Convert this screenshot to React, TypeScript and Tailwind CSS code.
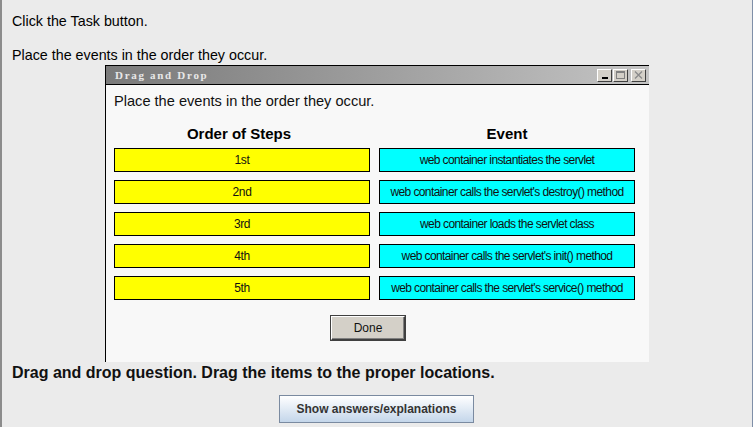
import React from "react";

const steps = ["1st", "2nd", "3rd", "4th", "5th"];
const events = [
  "web container instantiates the servlet",
  "web container calls the servlet's destroy() method",
  "web container loads the servlet class",
  "web container calls the servlet's init() method",
  "web container calls the servlet's service() method",
];

function TitleBtn({ children }: { children: React.ReactNode }) {
  return (
    <div className="w-[15px] h-[13px] bg-[#d4d0c8] border-t border-l border-t-white border-l-white border-b border-r border-b-[#404040] border-r-[#404040] flex items-center justify-center">
      {children}
    </div>
  );
}

export default function App() {
  return (
    <div
      className="w-[753px] h-[427px] bg-[#ebebeb] border-l-2 border-l-[#8c8c8c] border-r border-r-[#7f8fa8] overflow-hidden text-black"
      style={{ fontFamily: '"Liberation Sans", Arial, sans-serif' }}
    >
      <div className="pl-[10px] pt-[13px] text-[14.3px] leading-[16px]">Click the Task button.</div>
      <div className="pl-[10px] mt-[18px] text-[14.3px] leading-[16px]">Place the events in the order they occur.</div>

      <div className="ml-[103px] mt-[2px] w-[544px] h-[297px] border-l border-t border-black bg-[#f8f8f8] flex flex-col">
        <div className="h-[19px] border-b border-black bg-gradient-to-r from-[#7a7a7a] to-[#c4c4c4] flex items-center justify-between pl-[9px] pr-[3px]">
          <span
            className="text-[11px] font-bold text-[#e8e8e8] tracking-[1.7px]"
            style={{ fontFamily: '"Liberation Serif", "DejaVu Serif", serif' }}
          >
            Drag and Drop
          </span>
          <div className="flex gap-[1px] items-center">
            <TitleBtn>
              <div className="w-[6px] h-[2px] bg-black mt-[6px]" />
            </TitleBtn>
            <TitleBtn>
              <div className="w-[9px] h-[8px] border border-[#808080] border-t-2" />
            </TitleBtn>
            <div className="ml-[2px]">
              <TitleBtn>
                <svg width="9" height="8" viewBox="0 0 9 8">
                  <path d="M1 0.5 L8 7.5 M8 0.5 L1 7.5" stroke="#8a8a8a" strokeWidth="1.3" />
                </svg>
              </TitleBtn>
            </div>
          </div>
        </div>

        <div className="pl-[8px] pt-[8px] text-[14.6px] leading-[16px] text-[#111]">
          Place the events in the order they occur.
        </div>

        <div className="pl-[8px] mt-[16px] flex gap-[9px]">
          <div className="w-[256px] text-center font-bold text-[15px] leading-[17px] pr-[6px]">Order of Steps</div>
          <div className="w-[256px] text-center font-bold text-[15px] leading-[17px]">Event</div>
        </div>

        <div className="pl-[8px] mt-[6px] flex flex-col gap-[8px]">
          {steps.map((s, i) => (
            <div key={s} className="flex gap-[9px]">
              <div className="w-[256px] h-[24px] bg-[#ffff00] border border-black flex items-center justify-center text-[12px] tracking-[-0.4px] text-[#111]">
                {s}
              </div>
              <div className="w-[256px] h-[24px] bg-[#00ffff] border border-black flex items-center justify-center text-[12px] tracking-[-0.6px] text-[#111] whitespace-nowrap">
                {events[i]}
              </div>
            </div>
          ))}
        </div>

        <div className="pl-[225px] mt-[16px]">
          <div className="w-[74px] h-[24px] bg-[#d4d0c8] border border-t-white border-l-white border-b-[#404040] border-r-[#404040] shadow-[inset_-1px_-1px_0_#808080,0_0_0_1px_#404040] flex items-center justify-center text-[12px] text-[#111]">
            Done
          </div>
        </div>
      </div>

      <div className="pl-[10px] mt-[2px] text-[16px] leading-[18px] font-bold text-[#111]">
        Drag and drop question. Drag the items to the proper locations.
      </div>

      <div className="pl-[277px] mt-[13px]">
        <div className="w-[195px] h-[28px] border border-[#7a8aa0] bg-gradient-to-b from-white to-[#c4d6ea] flex items-center justify-center text-[12px] font-bold text-[#333]">
          Show answers/explanations
        </div>
      </div>
    </div>
  );
}
